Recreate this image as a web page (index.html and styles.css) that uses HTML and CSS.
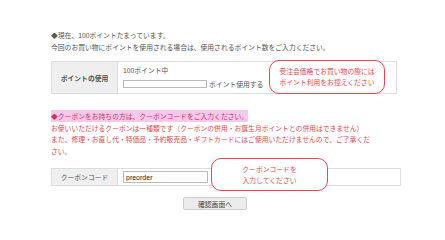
FILE: index.html
```html
<!doctype html>
<html lang="ja">
<head>
    <meta charset="UTF-8">
    <title>ポイント・クーポン</title>
    <link rel="stylesheet" href="styles.css">
</head>
<body>
    <div class="wrap">
        <p class="lead">◆現在、100ポイントたまっています。<br>今回のお買い物にポイントを使用される場合は、使用されるポイント数をご入力ください。</p>

        <div class="box box-point">
            <table class="form-table">
                <tr>
                    <th>ポイントの使用</th>
                    <td>
                        <div class="have">100ポイント中</div>
                        <input type="text" class="point-input"><span class="unit">ポイント使用する</span>
                    </td>
                </tr>
            </table>
            <div class="balloon balloon-point">受注会価格でお買い物の際には<br>ポイント利用をお控えください</div>
        </div>

        <div class="coupon-note">
            <span class="mark">◆クーポンをお持ちの方は、クーポンコードをご入力ください。</span><br>
            お使いいただけるクーポンは一種類です（クーポンの併用・お誕生月ポイントとの併用はできません）<br>
            また、修理・お直し代・特価品・予約販売品・ギフトカードにはご使用いただけませんので、ご了承ください。
        </div>

        <div class="box box-coupon">
            <table class="form-table coupon-table">
                <tr>
                    <th>クーポンコード</th>
                    <td><input type="text" class="coupon-input" value="preorder"></td>
                </tr>
            </table>
            <div class="balloon balloon-coupon">クーポンコードを<br>入力してください</div>
        </div>

        <button type="button" class="confirm">確認画面へ</button>
    </div>
</body>
</html>
```

FILE: styles.css
```css
body {
    margin: 0;
    background-color: #fff;
    color: #555;
    font-family: "Noto Sans CJK JP", "Liberation Sans", sans-serif;
    font-size: 6.8px;
}

.wrap {
    padding: 29px 0 0 51px;
    width: 350px;
}

.lead {
    margin: 0;
    line-height: 12px;
}

.box {
    position: relative;
    margin-top: 8px;
}

.form-table {
    width: 346px;
    border-collapse: collapse;
    border: 1px solid #ddd;
}

.form-table th {
    width: 65px;
    height: 29px;
    padding: 0;
    background-color: #efefef;
    border-right: 1px solid #ddd;
    font-weight: bold;
    font-size: 6.8px;
    color: #555;
    text-align: center;
}

.form-table td {
    padding: 3px 5px 4px;
    vertical-align: middle;
}

.have {
    line-height: 10px;
    margin-bottom: 3px;
}

.point-input {
    width: 84px;
    height: 8px;
    padding: 0;
    margin: 0;
    border: 1px solid #bbb;
    vertical-align: middle;
    box-sizing: border-box;
}

.unit {
    margin-left: 2px;
    vertical-align: middle;
}

.balloon {
    position: absolute;
    border: 1.5px solid #e8474f;
    border-radius: 10px;
    background-color: #fff;
    color: #e8474f;
    text-align: center;
    line-height: 11px;
    box-sizing: border-box;
    display: flex;
    align-items: center;
    justify-content: center;
}

.balloon-point {
    left: 218px;
    top: -1px;
    width: 116px;
    height: 34px;
}

.coupon-note {
    margin-top: 17px;
    width: 320px;
    color: #e0474c;
    line-height: 11.5px;
}

.mark {
    background-color: #f7c8ec;
    color: #c8365a;
    padding: 1px 0;
}

.box-coupon {
    margin-top: 11px;
}

.coupon-table {
    width: 350px;
}

.coupon-table th {
    height: 16px;
    font-weight: normal;
}

.coupon-table td {
    padding: 1px 5px;
}

.coupon-input {
    width: 85px;
    height: 12px;
    padding: 0 2px;
    margin: 0;
    border: 1px solid #bbb;
    font-family: "Liberation Sans", sans-serif;
    font-size: 7px;
    color: #222;
    box-sizing: border-box;
}

.balloon-coupon {
    left: 160px;
    top: -10px;
    width: 117px;
    height: 33px;
}

.confirm {
    display: block;
    margin: 11px 0 0 132px;
    width: 64px;
    height: 13px;
    padding: 0;
    background-color: #ececec;
    border: 1px solid #ccc;
    border-radius: 2px;
    font-family: "Noto Sans CJK JP", sans-serif;
    font-size: 6.8px;
    color: #444;
}
```
